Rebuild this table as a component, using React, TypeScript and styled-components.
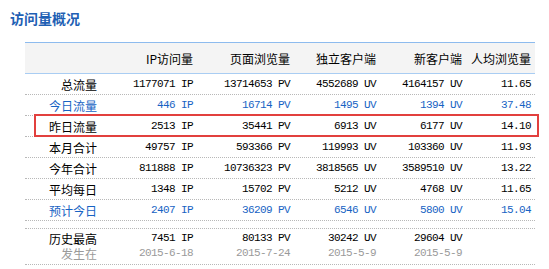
import React from 'react';
import styled, { createGlobalStyle } from 'styled-components';

const GlobalStyle = createGlobalStyle`
  body {
    margin: 0;
    background: #fff;
    font-family: "Noto Sans CJK SC", "DejaVu Sans", sans-serif;
    font-size: 12px;
    color: #000;
  }
`;

const COLS = '75px 96px 97px 86px 86px 70px';

const Page = styled.div`
  width: 549px;
  height: 269px;
  overflow: hidden;
`;

const Title = styled.h2`
  margin: 0;
  padding: 8px 0 0 10px;
  height: 20px;
  line-height: 20px;
  font-size: 14px;
  font-weight: bold;
  color: #1e5fb4;
`;

const Table = styled.div`
  margin: 14px 0 0 25px;
  width: 510px;
`;

const HeadRow = styled.div`
  display: grid;
  grid-template-columns: ${COLS};
  height: 30px;
  align-items: center;
  background: #f4f4f4;
  border-top: 1px solid #8dbbee;
  border-bottom: 1px solid #a9cdf3;
`;

const Row = styled.div<{ $blue?: boolean; $mark?: boolean }>`
  position: relative;
  display: grid;
  grid-template-columns: ${COLS};
  height: 20px;
  align-items: center;
  border-bottom: 1px dotted #b8b8b8;
  color: ${(p) => (p.$blue ? '#1763c4' : '#000')};
  &:first-of-type {
    height: 21px;
  }
  ${(p) =>
    p.$mark &&
    `
    &::after {
      content: '';
      position: absolute;
      top: -2px;
      bottom: -1px;
      left: 9px;
      right: -4px;
      border: 2px solid #e2403e;
      pointer-events: none;
    }
  `}
`;

const Spacer = styled.div`
  height: 7px;
  border-bottom: 1px dotted #b8b8b8;
`;

const HistoryRow = styled.div`
  display: grid;
  grid-template-columns: ${COLS};
  height: 33px;
  padding-top: 2px;
  border-bottom: 1px dotted #b8b8b8;
`;

const Cell = styled.div<{ $pad?: number }>`
  text-align: right;
  padding-right: ${(p) => p.$pad ?? 3}px;
  white-space: nowrap;
  line-height: 15px;
`;

const Num = styled.span<{ $grey?: boolean }>`
  display: block;
  font-family: "Liberation Mono", "DejaVu Sans Mono", monospace;
  font-size: 11px;
  letter-spacing: -0.6px;
  line-height: 15px;
  color: ${(p) => (p.$grey ? '#9a9a9a' : 'inherit')};
`;

const Label = styled.span<{ $grey?: boolean }>`
  display: block;
  line-height: 15px;
  color: ${(p) => (p.$grey ? '#9a9a9a' : 'inherit')};
`;

const heads = ['IP访问量', '页面浏览量', '独立客户端', '新客户端', '人均浏览量'];

interface Stat {
  label: string;
  ip: string;
  pv: string;
  uv: string;
  nuv: string;
  avg: string;
  blue?: boolean;
  mark?: boolean;
}

const rows: Stat[] = [
  { label: '总流量', ip: '1177071', pv: '13714653', uv: '4552689', nuv: '4164157', avg: '11.65' },
  { label: '今日流量', ip: '446', pv: '16714', uv: '1495', nuv: '1394', avg: '37.48', blue: true },
  { label: '昨日流量', ip: '2513', pv: '35441', uv: '6913', nuv: '6177', avg: '14.10', mark: true },
  { label: '本月合计', ip: '49757', pv: '593366', uv: '119993', nuv: '103360', avg: '11.93' },
  { label: '今年合计', ip: '811888', pv: '10736323', uv: '3818565', nuv: '3589510', avg: '13.22' },
  { label: '平均每日', ip: '1348', pv: '15702', uv: '5212', nuv: '4768', avg: '11.65' },
  { label: '预计今日', ip: '2407', pv: '36209', uv: '6546', nuv: '5800', avg: '15.04', blue: true },
];

const best = [
  { value: '7451 IP', date: '2015-6-18' },
  { value: '80133 PV', date: '2015-7-24' },
  { value: '30242 UV', date: '2015-5-9' },
  { value: '29604 UV', date: '2015-5-9' },
];

export default function App() {
  return (
    <Page>
      <GlobalStyle />
      <Title>访问量概况</Title>
      <Table>
        <HeadRow>
          <Cell />
          {heads.map((h, i) => (
            <Cell key={h} $pad={i === 4 ? 4 : 3}>
              {h}
            </Cell>
          ))}
        </HeadRow>
        {rows.map((r) => (
          <Row key={r.label} $blue={r.blue} $mark={r.mark}>
            <Cell>
              <Label>{r.label}</Label>
            </Cell>
            <Cell>
              <Num>{r.ip} IP</Num>
            </Cell>
            <Cell>
              <Num>{r.pv} PV</Num>
            </Cell>
            <Cell>
              <Num>{r.uv} UV</Num>
            </Cell>
            <Cell>
              <Num>{r.nuv} UV</Num>
            </Cell>
            <Cell $pad={4}>
              <Num>{r.avg}</Num>
            </Cell>
          </Row>
        ))}
        <Spacer />
        <HistoryRow>
          <Cell>
            <Label>历史最高</Label>
            <Label $grey>发生在</Label>
          </Cell>
          {best.map((b, i) => (
            <Cell key={i}>
              <Num>{b.value}</Num>
              <Num $grey>{b.date}</Num>
            </Cell>
          ))}
          <Cell $pad={4} />
        </HistoryRow>
      </Table>
    </Page>
  );
}
